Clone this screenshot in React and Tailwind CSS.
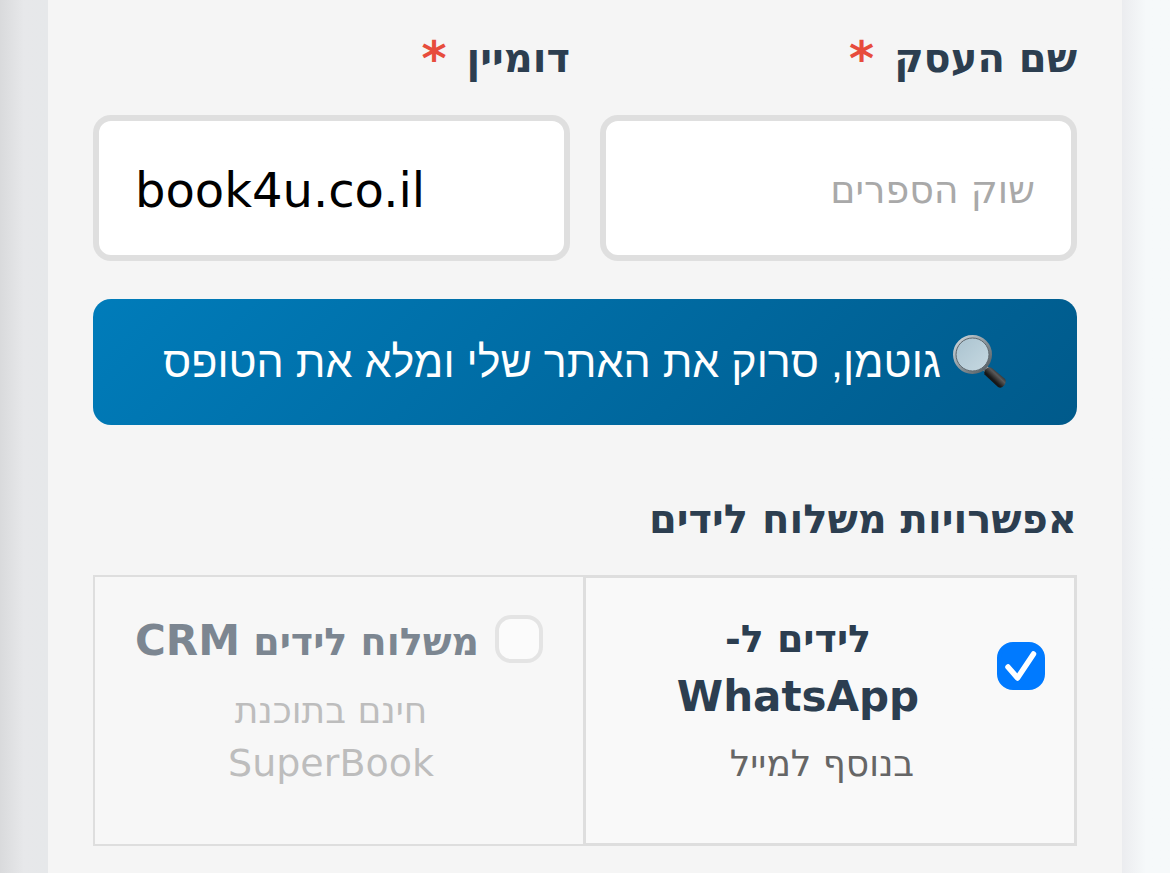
import React from 'react';

const hebrew = "font-['DejaVu_Sans','Open_Sans',sans-serif]";

function Magnifier() {
  return (
    <svg viewBox="0 0 54 54" className="h-[54px] w-[54px] shrink-0" aria-hidden="true">
      <defs>
        <linearGradient id="rim" x1="0" y1="0" x2="1" y2="1">
          <stop offset="0" stopColor="#d5dde2" />
          <stop offset="0.5" stopColor="#8d979d" />
          <stop offset="1" stopColor="#4d555a" />
        </linearGradient>
        <linearGradient id="lens" x1="0" y1="0" x2="1" y2="1">
          <stop offset="0" stopColor="#a9c2cf" />
          <stop offset="1" stopColor="#c8dae2" />
        </linearGradient>
        <linearGradient id="grip" x1="0" y1="1" x2="1" y2="0">
          <stop offset="0" stopColor="#080808" />
          <stop offset="0.4" stopColor="#181818" />
          <stop offset="0.6" stopColor="#5a5a5a" />
          <stop offset="0.8" stopColor="#141414" />
        </linearGradient>
      </defs>
      <path d="M31 32 L37 38" stroke="#a8b0b4" strokeWidth="6" />
      <path d="M31 34 L35 38" stroke="#596166" strokeWidth="2" />
      <path d="M31.5 39.5 Q30.5 36 33.5 33.500 Q36.500 31 39.500 33.500 L51.500 43.500 Q54 46 51.500 50 Q48.500 54 45 52 Z" fill="url(#grip)" />
      <circle cx="19.500" cy="19.500" r="18" fill="url(#lens)" stroke="url(#rim)" strokeWidth="3" />
      <circle cx="19.500" cy="19.500" r="16.500" fill="none" stroke="#5d676d" strokeWidth="1" />
    </svg>
  );
}

function Field({ id, label, children }) {
  return (
    <div className="min-w-0 flex-1">
      <label htmlFor={id} className="flex h-[60px] items-center gap-5 text-[40px] leading-[60px] font-bold text-[#2c3e50]">
        <span>{label}</span>
        <span className="text-[48px] text-[#e74c3c]">*</span>
      </label>
      {children}
    </div>
  );
}

const inputBase = 'mt-[27px] block h-[146px] w-full rounded-[18px] border-6 border-[#dfdfdf] bg-white px-[36px] pt-1 outline-none';

function Option({ id, checked, title, extra, note, onChange, className }) {
  return (
    <div className={`min-w-0 flex-1 px-[29px] pt-8 pb-[53px] text-center ${className}`}>
      <div className="flex min-h-16 items-center justify-center gap-4">
        <span className="relative mb-1 block h-12 w-12 shrink-0">
          <input
            id={id}
            type="checkbox"
            checked={checked}
            onChange={onChange}
            className="block h-12 w-12 appearance-none rounded-2xl border-4 border-[#dadada] bg-white checked:border-[#007aff] checked:bg-[#007aff]"
          />
          {checked && (
            <svg viewBox="0 0 48 48" className="pointer-events-none absolute inset-0 h-12 w-12" fill="none" aria-hidden="true">
              <path d="M11 25 L20.500 36 L36.500 12" stroke="#fff" strokeWidth="5.500" strokeLinecap="round" strokeLinejoin="round" />
            </svg>
          )}
        </span>
        {title}
      </div>
      <p className="mt-[11px] pr-4 text-[36px] leading-[53px]">
        {note}
        {extra && <span className="block text-[38px]">{extra}</span>}
      </p>
    </div>
  );
}

export default function App() {
  const [whatsapp, setWhatsapp] = React.useState(true);
  const [crm, setCrm] = React.useState(false);
  return (
    <div dir="rtl" className={`${hebrew} flex min-h-screen`}>
      <div className="w-12 shrink-0 bg-linear-to-r from-[#ebecef] to-[#f6f9fa] to-50%" />
      <main className="min-w-0 flex-1 bg-[#f5f5f5] px-[45px] pt-7 pb-7">
        <div className="flex gap-[30px]">
          <Field id="business" label="שם העסק">
            <input id="business" type="text" placeholder="שוק הספרים" className={`${inputBase} text-[38px] placeholder:text-[#a9a9a9]`} />
          </Field>
          <Field id="domain" label="דומיין">
            <input id="domain" type="text" dir="ltr" defaultValue="book4u.co.il" className={`${inputBase} text-[48px] text-black`} />
          </Field>
        </div>
        <button type="button" className="mt-[38px] flex h-[126px] w-full items-center justify-center gap-3 rounded-[18px] bg-linear-135 from-[#007cba] to-[#005a8b] font-['Liberation_Sans',sans-serif] text-[43px] text-white">
          <Magnifier />
          <span>גוטמן, סרוק את האתר שלי ומלא את הטופס</span>
        </button>
        <h2 className="mt-[64px] text-[40px] leading-[60px] font-bold text-[#2c3e50]">אפשרויות משלוח לידים</h2>
        <div className="mt-[26px] flex">
          <Option
            id="whatsapp"
            checked={whatsapp}
            onChange={() => setWhatsapp(!whatsapp)}
            className="border-3 border-[#dedede] bg-[#f9f9f9] text-[#666]"
            title={
              <label htmlFor="whatsapp" className="flex-1 text-[38px] leading-[58px] font-bold text-[#2c3e50]">
                לידים ל-
                <span className="block text-[42px]">WhatsApp</span>
              </label>
            }
            note="בנוסף למייל"
          />
          <Option
            id="crm"
            checked={crm}
            onChange={() => setCrm(!crm)}
            className="border-y-2 border-l-2 border-[#d0d0d0] bg-[#f9f9f9] text-[#999] opacity-60"
            title={
              <label htmlFor="crm" className="text-[38px] leading-[58px] font-bold whitespace-nowrap text-[#2c3e50]">
                משלוח לידים <span className="text-[42px]">CRM</span>
              </label>
            }
            note="חינם בתוכנת"
            extra="SuperBook"
          />
        </div>
      </main>
      <div className="w-12 shrink-0 bg-linear-to-r from-[#d9dadc] via-[#e7e8ea] to-[#e6e8ea]" />
    </div>
  );
}
